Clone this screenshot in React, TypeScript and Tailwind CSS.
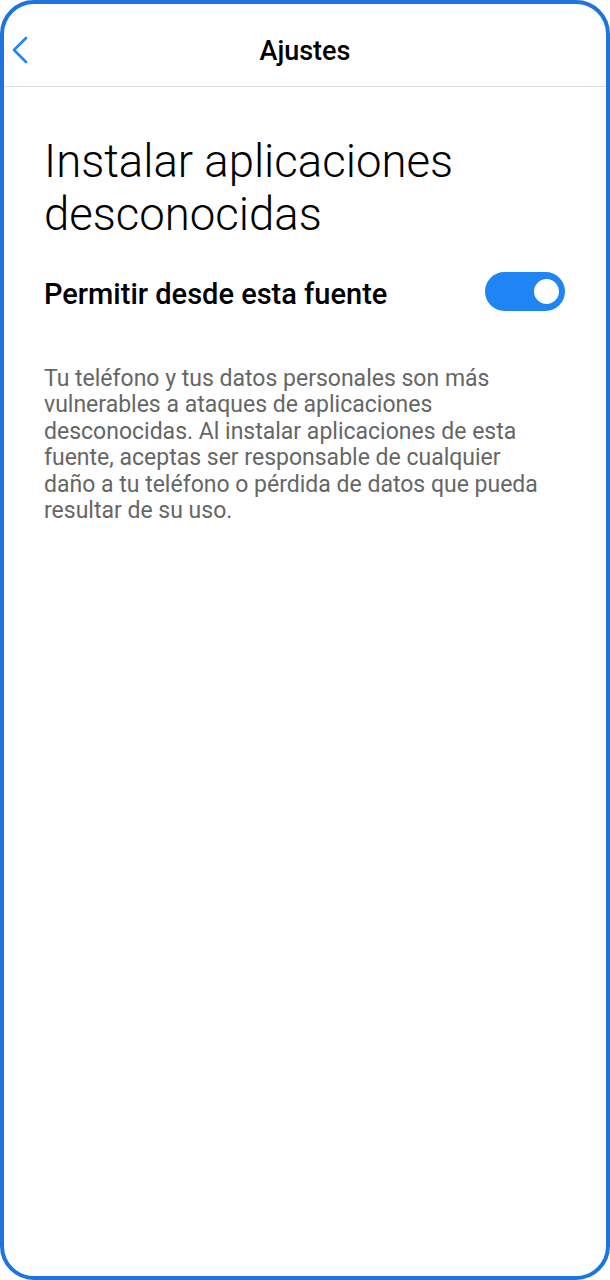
import React from "react";

const font = { fontFamily: "Roboto, 'Noto Sans', sans-serif" };

const Toggle = ({ on }: { on: boolean }) => (
	<div
		className={`flex h-[39px] w-[80px] shrink-0 items-center rounded-full px-[6px] ${on ? "justify-end bg-[#1f85f5]" : "justify-start bg-gray-300"}`}
	>
		<div className="h-[25px] w-[25px] rounded-full bg-white" />
	</div>
);

export default function App() {
	return (
		<div className="h-[1280px] w-[610px] bg-white" style={font}>
			<div className="flex h-full w-full flex-col overflow-hidden rounded-[34px] border-4 border-[#1c75dc] bg-white">
				<header className="relative flex h-[83px] shrink-0 items-center justify-center border-b border-[#dedede]">
					<button className="absolute left-[6px] top-[31px] text-[#1f85f5]">
						<svg width="20" height="30" viewBox="0 0 20 30" fill="none">
							<path d="M16 3L4 15L16 27" stroke="currentColor" strokeWidth="2.6" strokeLinecap="round" strokeLinejoin="round" />
						</svg>
					</button>
					<h1 className="pt-[12px] text-[27px] font-medium text-black">Ajustes</h1>
				</header>
				<main className="flex flex-col px-[40px] pt-[48px]">
					<h2 className="text-[45.5px] leading-[53px] font-light text-black">
						Instalar aplicaciones desconocidas
					</h2>
					<div className="mt-[26px] flex items-center justify-between pr-[1px]">
						<span className="pt-[6px] text-[29px] font-medium text-black">Permitir desde esta fuente</span>
						<Toggle on />
					</div>
					<p className="mt-[49px] max-w-[500px] text-[23px] leading-[26.6px] text-[#666666]">
						Tu teléfono y tus datos personales son más vulnerables a ataques de aplicaciones desconocidas. Al instalar
						aplicaciones de esta fuente, aceptas ser responsable de cualquier daño a tu teléfono o pérdida de datos que
						pueda resultar de su uso.
					</p>
				</main>
			</div>
		</div>
	);
}
